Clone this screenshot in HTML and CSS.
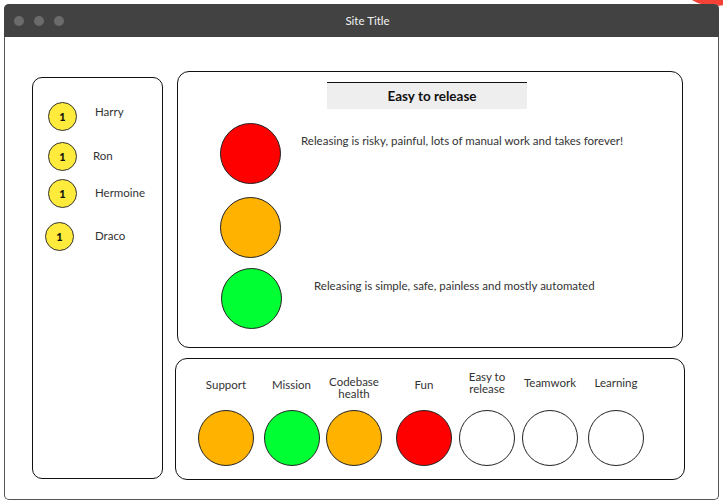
FILE: index.html
```html
<!DOCTYPE html>
<html>
<head>
<meta charset="utf-8">
<title>Site Title</title>
<link rel="stylesheet" href="styles.css">
</head>
<body>
<div class="corner-badge"></div>
<div class="window">
  <div class="titlebar">
    <div class="dots"><span class="dot"></span><span class="dot"></span><span class="dot"></span></div>
    <div class="title">Site Title</div>
  </div>
  <div class="content">
    <div class="people">
      <div class="person"><span class="badge">1</span><span class="name">Harry</span></div>
      <div class="person"><span class="badge">1</span><span class="name">Ron</span></div>
      <div class="person"><span class="badge">1</span><span class="name">Hermoine</span></div>
      <div class="person"><span class="badge">1</span><span class="name">Draco</span></div>
    </div>
    <div class="main">
      <div class="detail">
        <div class="detail-head">Easy to release</div>
        <div class="level level-red"><span class="light red"></span><span class="level-text">Releasing is risky, painful, lots of manual work and takes forever!</span></div>
        <div class="level level-amber"><span class="light amber"></span></div>
        <div class="level level-green"><span class="light green"></span><span class="level-text">Releasing is simple, safe, painless and mostly automated</span></div>
      </div>
      <div class="summary">
        <div class="metric"><div class="metric-label">Support</div><span class="dot-lg amber"></span></div>
        <div class="metric"><div class="metric-label">Mission</div><span class="dot-lg green"></span></div>
        <div class="metric"><div class="metric-label drop">Codebase<br>health</div><span class="dot-lg amber"></span></div>
        <div class="metric"><div class="metric-label">Fun</div><span class="dot-lg red"></span></div>
        <div class="metric"><div class="metric-label lift">Easy to<br>release</div><span class="dot-lg empty"></span></div>
        <div class="metric"><div class="metric-label lift">Teamwork</div><span class="dot-lg empty"></span></div>
        <div class="metric"><div class="metric-label lift">Learning</div><span class="dot-lg empty"></span></div>
      </div>
    </div>
  </div>
</div>
</body>
</html>
```
FILE: styles.css
```css
* { box-sizing: border-box; }
html, body { margin: 0; padding: 0; background: #fff; }
body {
  font-family: "Source Sans Pro", Lato, "Liberation Sans", sans-serif;
  color: #333;
  width: 723px;
  height: 504px;
  overflow: hidden;
  position: relative;
}
.corner-badge {
  position: absolute;
  left: 683px;
  top: -34px;
  width: 64px;
  height: 40px;
  border-radius: 50%;
  background: #f44336;
  z-index: 0;
}
.window {
  position: relative;
  z-index: 1;
  margin: 4px 0 0 4px;
  width: 715px;
  height: 496px;
  border: 1px solid #555;
  border-top: none;
  border-radius: 5px;
  background: #fff;
}
.titlebar {
  height: 33px;
  margin: 0 -1px;
  background: #424242;
  border-radius: 5px 5px 0 0;
  display: flex;
  align-items: center;
  position: relative;
}
.dots { display: flex; gap: 10px; padding-left: 10px; }
.dot { width: 10px; height: 10px; border-radius: 50%; background: #6b6b6b; }
.title {
  position: absolute;
  left: 0; right: 0; top: 0; bottom: 0;
  display: flex;
  align-items: center;
  justify-content: center;
  color: #f2f2f2;
  font-size: 11.5px;
  padding-left: 12px;
  padding-top: 0;
}
.content {
  display: flex;
  align-items: flex-start;
  padding: 34px 0 0 27px;
}
.people {
  margin-top: 6px;
  width: 131px;
  height: 402px;
  border: 1px solid #111;
  border-radius: 10px;
  padding-top: 24px;
}
.person {
  display: flex;
  align-items: center;
  height: 28px;
  padding-left: 15px;
  font-size: 11.5px;
}
.person + .person { margin-top: 12px; }
.person:nth-child(3) { margin-top: 9px; }
.person:nth-child(4) { margin-top: 15px; padding-left: 12px; }
.badge {
  width: 29px;
  height: 29px;
  border-radius: 50%;
  background: #ffeb3b;
  border: 1px solid #333;
  display: flex;
  align-items: center;
  justify-content: center;
  font-size: 11px;
  font-weight: 900;
  color: #111;
  flex: none;
}
.name { margin-left: 18px; }
.person:nth-child(1) .name { margin-top: -9px; }
.person:nth-child(2) .name { margin-left: 16px; margin-top: -2px; }
.person:nth-child(3) .name { margin-top: -2px; }
.person:nth-child(4) .name { margin-left: 21px; margin-top: -1px; }
.main {
  margin-left: 14px;
  width: 506px;
}
.detail {
  height: 277px;
  border: 1px solid #111;
  border-radius: 12px;
  padding-top: 10px;
  padding-left: 42px;
}
.detail-head {
  margin-left: 107px;
  width: 200px;
  height: 27px;
  background: #eeeeee;
  border-top: 1px solid #111;
  display: flex;
  align-items: center;
  justify-content: center;
  font-weight: bold;
  font-size: 13.5px;
  color: #111;
  padding-left: 10px;
}
.level { display: flex; align-items: flex-start; }
.level-red { margin-top: 14px; }
.level-amber { margin-top: 13px; }
.level-green { margin-top: 10px; padding-left: 1px; }
.light {
  width: 61px;
  height: 61px;
  border-radius: 50%;
  border: 1px solid #222;
  flex: none;
}
.level-text {
  font-size: 11.5px;
  line-height: 14px;
  margin-top: 11px;
  margin-left: 20px;
  white-space: nowrap;
}
.level-green .level-text { margin-left: 32px; }
.red { background: #ff0000; }
.amber { background: #ffb300; }
.green { background: #00ff33; }
.empty { background: #fff; }
.summary {
  margin-top: 10px;
  margin-left: -2px;
  width: 510px;
  height: 122px;
  border: 1px solid #111;
  border-radius: 12px;
  padding: 12px 0 0 18px;
  display: grid;
  grid-template-columns: 64px 67px 58px 82px 44px 82px 50px;
  align-items: start;
}
.metric {
  display: flex;
  flex-direction: column;
  align-items: center;
}
.metric-label {
  height: 28px;
  display: flex;
  align-items: center;
  justify-content: center;
  text-align: center;
  font-size: 11.5px;
  line-height: 12px;
  white-space: nowrap;
}
.metric-label.lift { margin-top: -2px; margin-bottom: 2px; }
.metric-label.drop { margin-top: 3px; margin-bottom: -3px; }
.dot-lg {
  flex: none;
  margin-top: 11px;
  width: 56px;
  height: 56px;
  border-radius: 50%;
  border: 1px solid #222;
}
```
